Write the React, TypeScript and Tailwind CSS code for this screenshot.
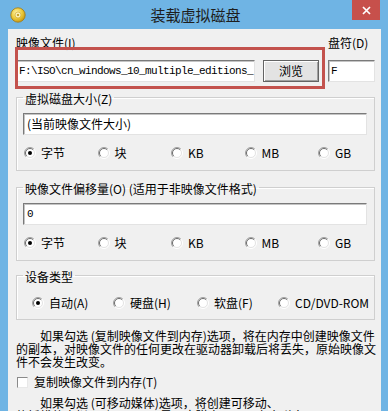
const cjk = "font-['Noto_Sans_CJK_SC',sans-serif]";

function Radio({ checked = false }: { checked?: boolean }) {
  return (
    <svg width="12" height="12" viewBox="0 0 12 12" className="shrink-0">
      <circle cx="6" cy="6" r="5" fill="#fff" />
      <path d="M2.1 9.9 A5.5 5.5 0 0 1 9.9 2.1" stroke="#a0a0a0" fill="none" />
      <path d="M2.8 9.2 A4.5 4.5 0 0 1 9.2 2.8" stroke="#6d6d6d" fill="none" />
      <path d="M9.9 2.1 A5.5 5.5 0 0 1 2.1 9.9" stroke="#ffffff" fill="none" />
      <path d="M9.2 2.8 A4.5 4.5 0 0 1 2.8 9.2" stroke="#e3e3e3" fill="none" />
      {checked && <circle cx="6" cy="6" r="2" fill="#000" />}
    </svg>
  );
}

function RadioItem({ label, checked }: { label: string; checked?: boolean }) {
  return (
    <div className="flex items-center gap-[5px] leading-[14px]">
      <Radio checked={checked} />
      <span>{label}</span>
    </div>
  );
}

const sunken =
  "h-[22px] border border-t-[#7a7a7a] border-l-[#7a7a7a] border-r-[#e3e3e3] border-b-[#e3e3e3] bg-white shadow-[inset_1px_1px_0_#c4c4c4] flex items-center";

const group = "w-[359px] min-w-0 border border-[#cfcfcf] shadow-[inset_1px_1px_0_#fff]";

function UnitRow() {
  return (
    <div className="ml-[7px] mt-[11px] grid grid-cols-[73.5px_73.5px_73.5px_73.5px_auto]">
      <RadioItem label="字节" checked />
      <RadioItem label="块" />
      <RadioItem label="KB" />
      <RadioItem label="MB" />
      <RadioItem label="GB" />
    </div>
  );
}

function Legend({ children }: { children: React.ReactNode }) {
  return (
    <legend className="ml-[6px] px-[2px] pt-[4px] leading-[14px]">{children}</legend>
  );
}

function DiscIcon() {
  return (
    <svg width="16" height="16" viewBox="0 0 16 16">
      <defs>
        <radialGradient id="disc" cx="0.4" cy="0.35" r="0.7">
          <stop offset="0" stopColor="#fff3a8" />
          <stop offset="0.55" stopColor="#eccb3c" />
          <stop offset="1" stopColor="#c2920f" />
        </radialGradient>
      </defs>
      <circle cx="8" cy="8" r="7.2" fill="url(#disc)" stroke="#a67a0e" strokeWidth="0.8" />
      <circle cx="8" cy="8" r="3" fill="#fbf0b4" stroke="#caa22a" strokeWidth="0.6" />
      <circle cx="8" cy="8" r="1.1" fill="#b8900f" />
    </svg>
  );
}

export default function App() {
  return (
    <div className={`h-[411px] w-[388px] overflow-hidden bg-[#6fb4e4] ${cjk} text-[12px] text-black`}>
      {/* title bar */}
      <div className="flex h-[29px] items-start">
        <div className="ml-[10px] mt-[7px]">
          <DiscIcon />
        </div>
        <div className="flex-1 pl-[13px] pt-[4px] text-center text-[15px] leading-[22px] text-[#1e1e1e]">
          装载虚拟磁盘
        </div>
        <div className="mr-[8px] flex h-[20px] w-[28px] items-center justify-center bg-[#c7504b]">
          <svg width="9" height="9" viewBox="0 0 9 9">
            <path d="M1 1 L8 8 M8 1 L1 8" stroke="#fff" strokeWidth="1.7" />
          </svg>
        </div>
      </div>

      {/* client */}
      <div className="ml-[8px] h-[382px] w-[373px] overflow-hidden bg-[#f0f0f0] pl-[8px] pr-[6px] pt-[7px]">
        <div className="relative flex">
          <div className="w-[239px]">
            <div className="leading-[14px]">映像文件(I)</div>
            <div className={`mt-[10px] ${sunken} pl-[2px]`}>
              <span className="whitespace-nowrap font-['Liberation_Mono',monospace] text-[11px] tracking-[-0.6px]">
                F:\ISO\cn_windows_10_multiple_editions_
              </span>
            </div>
          </div>
          <div className="ml-[8px] w-[56px] pt-[24px]">
            <div className="flex h-[22px] items-center justify-center border border-[#646464] bg-[#e3e3e3] shadow-[inset_1px_1px_0_#ffffff,inset_-1px_-1px_0_#a0a0a0]">
              浏览
            </div>
          </div>
          <div className="ml-[9px] w-[47px]">
            <div className="leading-[14px]">盘符(D)</div>
            <div className={`mt-[10px] ${sunken} pl-[2px]`}>
              <span className="font-['Liberation_Mono',monospace] text-[11px]">F</span>
            </div>
          </div>
          <div className="pointer-events-none absolute left-[-1px] top-[11px] h-[42px] w-[310px] border-[3px] border-[#c3524d]" />
        </div>

        <fieldset className={`mt-[6px] pb-[10px] ${group}`}>
          <Legend>虚拟磁盘大小(Z)</Legend>
          <div className={`ml-[6px] mr-[7px] mt-[7px] ${sunken} pl-[3px]`}>(当前映像文件大小)</div>
          <UnitRow />
        </fieldset>

        <fieldset className={`mt-[7px] pb-[10px] ${group}`}>
          <Legend>映像文件偏移量(O) (适用于非映像文件格式)</Legend>
          <div className={`ml-[6px] mr-[7px] mt-[7px] ${sunken} pl-[3px]`}>
            <span className="font-['Liberation_Mono',monospace] text-[11px]">0</span>
          </div>
          <UnitRow />
        </fieldset>

        <fieldset className={`mt-[5px] pb-[9px] ${group}`}>
          <Legend>设备类型</Legend>
          <div className="ml-[15px] mt-[12px] grid grid-cols-[81px_84px_81px_auto]">
            <RadioItem label="自动(A)" checked />
            <RadioItem label="硬盘(H)" />
            <RadioItem label="软盘(F)" />
            <RadioItem label="CD/DVD-ROM" />
          </div>
        </fieldset>

        <div className="mt-[9px] whitespace-nowrap leading-[13px]">
          <div className="pl-[24px]">如果勾选 (复制映像文件到内存)选项，将在内存中创建映像文件</div>
          <div>的副本，对映像文件的任何更改在驱动器卸载后将丢失，原始映像文</div>
          <div>件不会发生改变。</div>
        </div>

        <div className="ml-[1px] mt-[7px] flex items-center gap-[6px] leading-[14px]">
          <div className="h-[11px] w-[11px] border border-t-[#8a8a8a] border-l-[#8a8a8a] border-r-[#e8e8e8] border-b-[#e8e8e8] bg-white" />
          <span>复制映像文件到内存(T)</span>
        </div>

        <div className="mt-[7px] whitespace-nowrap leading-[13px]">
          <div className="pl-[24px]">如果勾选 (可移动媒体)选项，将创建可移动、</div>
          <div>热插拔的虚拟驱动器，而不是固定磁盘，可以安全弹出。</div>
        </div>
      </div>
    </div>
  );
}
